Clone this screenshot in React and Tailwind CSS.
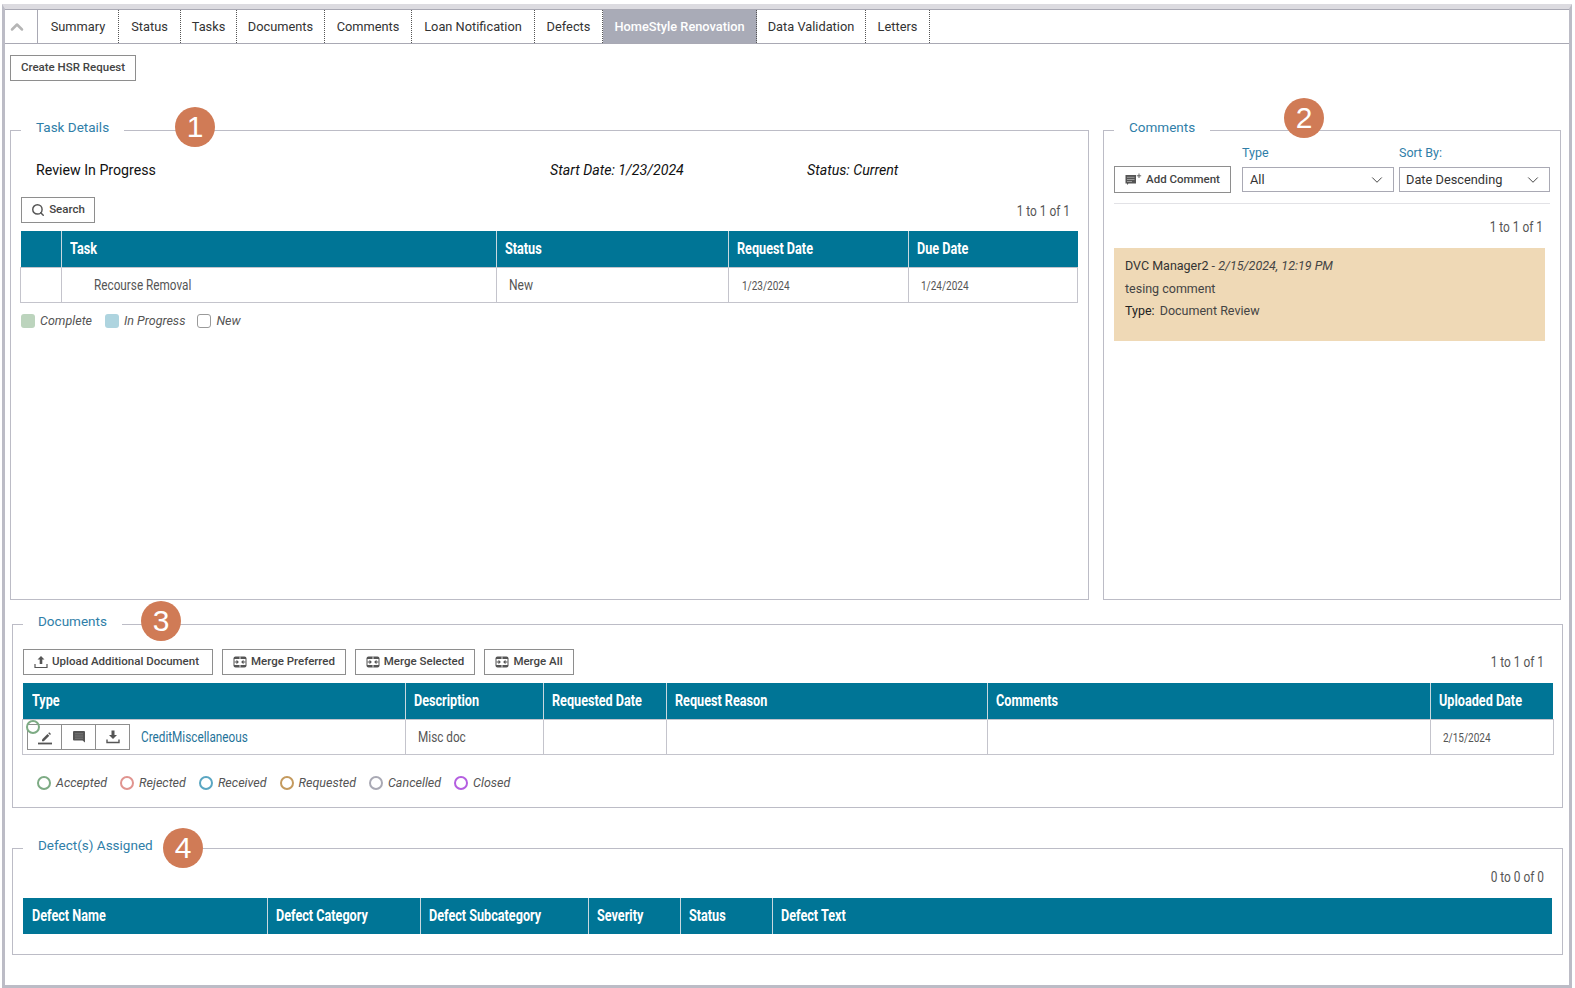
import React from "react";
import { Search, ChevronUp, ChevronDown } from "lucide-react";

const tabs = [
  { label: "Summary", w: "w-[81px]" },
  { label: "Status", w: "w-[62px]" },
  { label: "Tasks", w: "w-[56px]" },
  { label: "Documents", w: "w-[88px]" },
  { label: "Comments", w: "w-[87px]" },
  { label: "Loan Notification", w: "w-[123px]" },
  { label: "Defects", w: "w-[68px]" },
  { label: "HomeStyle Renovation", w: "w-[154px]", active: true },
  { label: "Data Validation", w: "w-[109px]" },
  { label: "Letters", w: "w-[64px]" },
];

const docStatuses = [
  { label: "Accepted", c: "border-[#7dab84]" },
  { label: "Rejected", c: "border-[#e0948f]" },
  { label: "Received", c: "border-[#5aa6c2]" },
  { label: "Requested", c: "border-[#c49a5e]" },
  { label: "Cancelled", c: "border-[#a9a9b4]" },
  { label: "Closed", c: "border-[#b45ee0]" },
];

function MergeIcon() {
  return (
    <svg width="14" height="12" viewBox="0 0 14 12" fill="#555">
      <rect x="0.500" y="0.500" width="13" height="11" rx="2" />
      <rect x="1.500" y="3" width="11" height="6" fill="#fff" />
      <rect x="6.600" y="0.500" width="0.800" height="11" fill="#fff" />
      <path d="M1.500 5.400h2V3.800L5.900 6 3.500 8.200V6.600h-2zM12.500 5.400h-2V3.800L8.100 6l2.400 2.200V6.600h2z" />
    </svg>
  );
}

function AddCommentIcon() {
  return (
    <svg width="17" height="13" viewBox="0 0 17 13" fill="#555">
      <path d="M0.500 2h10.500v8.500H3.500L2 12v-1.500H0.500z" />
      <path d="M2 4.300h7.500M2 6.500h7.500M2 8.500h5" stroke="#bbb" strokeWidth="0.700" />
      <path d="M14 0.500v4.500M11.800 2.800h4.400" stroke="#555" strokeWidth="0.900" />
    </svg>
  );
}

function UploadIcon() {
  return (
    <svg width="14" height="14" viewBox="0 0 14 14" fill="#555">
      <path d="M7 1l3.500 3.500H8.300V9H5.700V4.500H3.500z" />
      <path d="M1 9v3.500h12V9" fill="none" stroke="#555" strokeWidth="1.200" />
    </svg>
  );
}

function EditIcon() {
  return (
    <svg width="16" height="16" viewBox="0 0 16 16" fill="#555">
      <path d="M5 10.500L10.500 5l1.800 1.800L6.800 12.300H5z" />
      <path d="M11.200 4.300l1-1 1.800 1.800-1 1z" />
      <path d="M1 14.500h14" stroke="#555" strokeWidth="1.800" />
    </svg>
  );
}

function BubbleIcon() {
  return (
    <svg width="14" height="14" viewBox="0 0 14 14" fill="#555">
      <path d="M2 1h10a1 1 0 0 1 1 1v10.500L10.500 10.500H2a1 1 0 0 1-1-1V2a1 1 0 0 1 1-1z" />
      <path d="M3 3.800h8M3 6h8M3 8.200h8" stroke="#8a8a8a" strokeWidth="0.700" />
    </svg>
  );
}

function DownloadIcon() {
  return (
    <svg width="14" height="14" viewBox="0 0 14 14" fill="#555">
      <path d="M5.500 0.500h3V5h2.500L7 9 3 5h2.500z" />
      <path d="M1 9.500v3h12v-3" fill="none" stroke="#555" strokeWidth="1.400" />
    </svg>
  );
}

// the app's narrow face isn't installed, so squeeze Roboto
function Narrow({ children, className = "" }) {
  return <span className={`inline-block origin-left whitespace-nowrap ${className}`}>{children}</span>;
}

function Pager({ children, className = "" }) {
  return (
    <span className={`inline-block origin-right scale-x-[.82] text-[14.500px] leading-[18px] text-[#555] whitespace-nowrap ${className}`}>
      {children}
    </span>
  );
}

function Btn({ children, className = "" }) {
  return (
    <button className={`h-[26px] flex items-center gap-[4px] border border-[#8e8e8e] bg-white text-[11.500px] font-medium text-[#444] whitespace-nowrap ${className}`}>
      {children}
    </button>
  );
}

function Badge({ n, className }) {
  return (
    <div className={`absolute w-10 h-10 rounded-full bg-[#d07b56] text-white flex items-center justify-center text-[30px] leading-none font-['Liberation_Sans',sans-serif] ${className}`}>
      {n}
    </div>
  );
}

function Section({ title, className = "", children }) {
  return (
    <fieldset className={`relative border border-[#bcbcc6] ${className}`}>
      <legend className="ml-[10px] px-[15px] h-[20px] leading-[14px] text-[13.500px] text-[#2f7ea8]">{title}</legend>
      {children}
    </fieldset>
  );
}

function DataTable({ cols, children }) {
  return (
    <table className="table-fixed border-collapse">
      <colgroup>
        {cols.map((c, i) => (
          <col key={i} style={{ width: c.w }} />
        ))}
      </colgroup>
      <thead>
        <tr className="h-[36px] bg-[#007596]">
          {cols.map((c, i) => (
            <th key={i} className="pl-[8px] first:pl-[9px] text-left text-[16px] font-bold text-white border-l border-[#c8d8df] first:border-l-0">
              <Narrow className="scale-x-[.79]">{c.label}</Narrow>
            </th>
          ))}
        </tr>
      </thead>
      <tbody>{children}</tbody>
    </table>
  );
}

export default function App() {
  return (
    <div className="w-[1575px] h-[988px] bg-white pt-[4px] pl-[2px] font-['Roboto',sans-serif] text-[#333]">
      <div className="w-[1570px] h-[984px] border-l-[3px] border-r-[3px] border-b-[3px] border-[#bcbcc6] border-t-[5px] border-t-[#dcdbe0]">
        {/* tab strip */}
        <div className="flex h-[35px] border-y border-[#a9a9b4]">
          <div className="w-[33px] flex items-center justify-center pr-[8px] border-r border-[#a9a9b4]">
            <ChevronUp size={20} strokeWidth={3} className="text-[#b5b5b5]" />
          </div>
          {tabs.map((t) => (
            <div
              key={t.label}
              className={`${t.w} flex items-center justify-center text-[12.800px] border-r border-dotted border-[#555] ${
                t.active ? "bg-[#a9abb7] text-white font-medium" : "text-[#333]"
              }`}
            >
              {t.label}
            </div>
          ))}
        </div>

        <div className="pl-[5px] pr-[5px]">
          <Btn className="mt-[11px] w-[126px] justify-center">Create HSR Request</Btn>

          <div className="flex gap-[14px] mt-[39px]">
            {/* task details */}
            <Section title="Task Details" className="w-[1079px] h-[480px]">
              <Badge n="1" className="left-[164px] -top-[33px]" />
              <div className="flex items-center h-[20px] mt-[21px] pl-[25px] text-[14.200px]">
                <span className="w-[514px] text-[#111]">Review In Progress</span>
                <span className="w-[257px] italic text-[#111]">Start Date: 1/23/2024</span>
                <span className="italic text-[#111]">Status: Current</span>
              </div>
              <div className="flex items-center justify-between mt-[16px] pl-[10px] pr-[18px]">
                <Btn className="w-[74px] justify-center">
                  <Search size={14} strokeWidth={2.500} className="text-[#555]" />
                  Search
                </Btn>
                <Pager className="mt-[3px]">1 to 1 of 1</Pager>
              </div>
              <div className="mt-[8px] ml-[9px]">
                <DataTable
                  cols={[
                    { label: "", w: 41 },
                    { label: "Task", w: 435 },
                    { label: "Status", w: 232 },
                    { label: "Request Date", w: 180 },
                    { label: "Due Date", w: 169 },
                  ]}
                >
                  <tr className="h-[35px] text-[#555] text-[14px]">
                    <td className="border border-[#c4c4cc]" />
                    <td className="border border-[#c4c4cc] pl-[32px] pt-[2px]">
                      <Narrow className="scale-x-[.84]">Recourse Removal</Narrow>
                    </td>
                    <td className="border border-[#c4c4cc] pl-[12px] pt-[2px]">
                      <Narrow className="scale-x-[.86]">New</Narrow>
                    </td>
                    <td className="border border-[#c4c4cc] pl-[13px] pt-[3px] text-[12.500px]">
                      <Narrow className="scale-x-[.8]">1/23/2024</Narrow>
                    </td>
                    <td className="border border-[#c4c4cc] pl-[12px] pt-[3px] text-[12.500px]">
                      <Narrow className="scale-x-[.8]">1/24/2024</Narrow>
                    </td>
                  </tr>
                </DataTable>
              </div>
              <div className="flex items-center mt-[9px] ml-[10px] text-[12.500px] italic text-[#555]">
                <span className="w-[14px] h-[14px] rounded-[3px] bg-[#bcd4bd]" />
                <span className="ml-[5px] mr-[13px]">Complete</span>
                <span className="w-[14px] h-[14px] rounded-[3px] bg-[#aed4df]" />
                <span className="ml-[5px] mr-[12px]">In Progress</span>
                <span className="w-[14px] h-[14px] rounded-[3px] border border-[#9a9a9a]" />
                <span className="ml-[5px]">New</span>
              </div>
            </Section>

            {/* comments */}
            <Section title="Comments" className="w-[458px] h-[480px]">
              <Badge n="2" className="left-[180px] -top-[42px]" />
              <div className="flex items-end gap-[11px] mt-[6px] pl-[10px]">
                <Btn className="w-[117px] h-[27px] -mb-[1px] justify-center">
                  <AddCommentIcon />
                  Add Comment
                </Btn>
                <div className="w-[152px]">
                  <div className="text-[12.500px] text-[#2f7ea8] mb-[7px] leading-[14px]">Type</div>
                  <div className="h-[25px] flex items-center justify-between pl-[7px] pr-[7px] border border-[#a9a9b4] text-[12.800px]">
                    All
                    <ChevronDown size={18} strokeWidth={1.200} />
                  </div>
                </div>
                <div className="w-[151px] -ml-[6px]">
                  <div className="text-[12.500px] text-[#2f7ea8] mb-[7px] leading-[14px]">Sort By:</div>
                  <div className="h-[25px] flex items-center justify-between pl-[6px] pr-[7px] border border-[#a9a9b4] text-[12.800px]">
                    Date Descending
                    <ChevronDown size={18} strokeWidth={1.200} />
                  </div>
                </div>
              </div>
              <div className="ml-[10px] w-[436px] mt-[11px] border-t border-[#e2e2e6]" />
              <div className="mt-[14px] pr-[17px] text-right leading-[18px]">
                <Pager>1 to 1 of 1</Pager>
              </div>
              <div className="ml-[10px] mt-[11px] w-[431px] h-[93px] bg-[#efd9b6] pl-[11px] pt-[7px] text-[12.500px] text-[#444] leading-[22.500px]">
                <div>
                  <span className="text-[#333]">DVC Manager2</span> - <span className="italic">2/15/2024, 12:19 PM</span>
                </div>
                <div>tesing comment</div>
                <div>
                  <span className="text-[#222] mr-[2px]">Type:</span> Document Review
                </div>
              </div>
            </Section>
          </div>

          {/* documents */}
          <Section title="Documents" className="w-[1551px] ml-[2px] mt-[14px] h-[194px]">
            <Badge n="3" className="left-[128px] -top-[33px]" />
            <div className="flex items-center mt-[15px] ml-[10px] pr-[18px]">
              <Btn className="w-[190px] pl-[10px]">
                <UploadIcon />
                Upload Additional Document
              </Btn>
              <Btn className="w-[124px] ml-[9px] justify-center">
                <MergeIcon />
                Merge Preferred
              </Btn>
              <Btn className="w-[120px] ml-[9px] justify-center">
                <MergeIcon />
                Merge Selected
              </Btn>
              <Btn className="w-[90px] ml-[9px] justify-center">
                <MergeIcon />
                Merge All
              </Btn>
              <Pager className="ml-auto mt-[2px]">1 to 1 of 1</Pager>
            </div>
            <div className="mt-[8px] ml-[9px]">
              <DataTable
                cols={[
                  { label: "Type", w: 383 },
                  { label: "Description", w: 138 },
                  { label: "Requested Date", w: 121 },
                  { label: "Request Reason", w: 321 },
                  { label: "Comments", w: 443 },
                  { label: "Uploaded Date", w: 123 },
                ]}
              >
                <tr className="h-[35px] text-[14px] text-[#555]">
                  <td className="border border-[#c4c4cc]">
                    <div className="flex items-center pl-[4px]">
                      <div className="relative flex h-[26px] border border-[#8e8e8e]">
                        <span className="absolute -left-[2px] -top-[5px] w-[14px] h-[14px] rounded-full border-2 border-[#7dab84]" />
                        <span className="w-[34px] flex items-center justify-center border-r border-[#8e8e8e]">
                          <EditIcon />
                        </span>
                        <span className="w-[34px] flex items-center justify-center border-r border-[#8e8e8e]">
                          <BubbleIcon />
                        </span>
                        <span className="w-[33px] flex items-center justify-center">
                          <DownloadIcon />
                        </span>
                      </div>
                      <Narrow className="ml-[11px] mt-[2px] text-[#1f7399] scale-x-[.84]">CreditMiscellaneous</Narrow>
                    </div>
                  </td>
                  <td className="border border-[#c4c4cc] pl-[12px] pt-[2px]">
                    <Narrow className="scale-x-[.84]">Misc doc</Narrow>
                  </td>
                  <td className="border border-[#c4c4cc]" />
                  <td className="border border-[#c4c4cc]" />
                  <td className="border border-[#c4c4cc]" />
                  <td className="border border-[#c4c4cc] pl-[12px] pt-[3px] text-[12.500px]">
                    <Narrow className="scale-x-[.8]">2/15/2024</Narrow>
                  </td>
                </tr>
              </DataTable>
            </div>
            <div className="flex items-center mt-[19px] ml-[24px] text-[12.500px] italic text-[#555]">
              {docStatuses.map((s) => (
                <span key={s.label} className="flex items-center mr-[13px]">
                  <span className={`w-[14px] h-[14px] rounded-full border-2 ${s.c} mr-[5px]`} />
                  {s.label}
                </span>
              ))}
            </div>
          </Section>

          {/* defects */}
          <Section title="Defect(s) Assigned" className="w-[1551px] ml-[2px] mt-[30px] h-[117px]">
            <Badge n="4" className="left-[150px] -top-[30px]" />
            <div className="mt-[10px] pr-[18px] text-right leading-[18px]">
              <Pager>0 to 0 of 0</Pager>
            </div>
            <div className="mt-[11px] ml-[10px]">
              <DataTable
                cols={[
                  { label: "Defect Name", w: 244 },
                  { label: "Defect Category", w: 153 },
                  { label: "Defect Subcategory", w: 168 },
                  { label: "Severity", w: 92 },
                  { label: "Status", w: 92 },
                  { label: "Defect Text", w: 780 },
                ]}
              />
            </div>
          </Section>
        </div>
      </div>
    </div>
  );
}
